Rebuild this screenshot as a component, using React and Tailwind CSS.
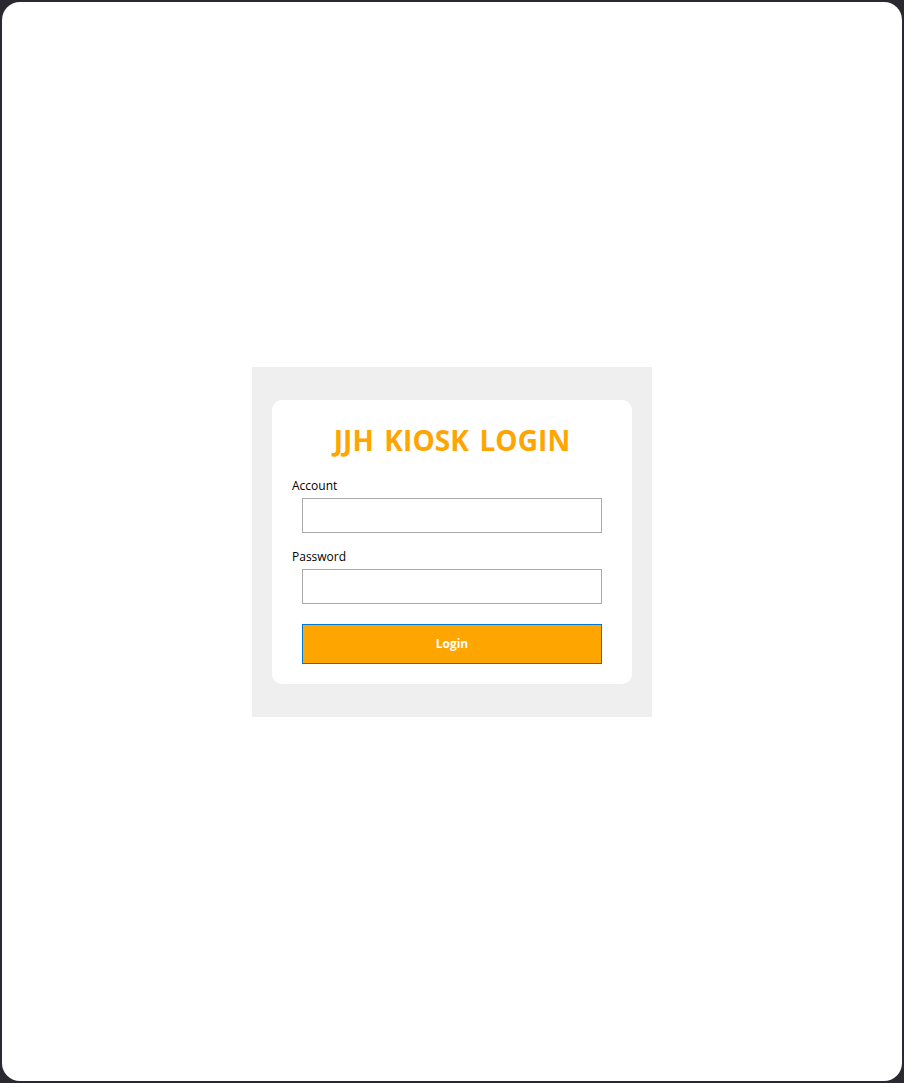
export default function App() {
  return (
    <div className="w-[904px] h-[1083px] bg-[#2b2930] p-[2px]" style={{ fontFamily: '"Open Sans", "Noto Sans", sans-serif' }}>
      <div className="w-full h-full bg-white rounded-[18px] flex items-center justify-center">
        <div className="w-[400px] h-[350px] bg-[#efefef] flex items-center justify-center">
          <div className="w-[360px] bg-white rounded-[10px] p-[20px] flex flex-col">
            <h1 className="h-[40px] flex items-center justify-center text-[28px] font-bold text-[#ffa500] leading-none tracking-[0.1px] [word-spacing:3px]">JJH KIOSK LOGIN</h1>
            <label className="mt-[17px] h-[18px] flex items-center text-[12px] text-black">Account</label>
            <input className="mt-[3px] mx-auto w-[300px] h-[35px] border border-[#aaaaaa] outline-none" />
            <label className="mt-[15px] h-[18px] flex items-center text-[12px] text-black">Password</label>
            <input type="password" className="mt-[3px] mx-auto w-[300px] h-[35px] border border-[#aaaaaa] outline-none" />
            <button className="mt-[20px] mx-auto w-[300px] h-[40px] bg-[#ffa500] border border-[#0078d7] text-white text-[12px] font-bold">Login</button>
          </div>
        </div>
      </div>
    </div>
  );
}
